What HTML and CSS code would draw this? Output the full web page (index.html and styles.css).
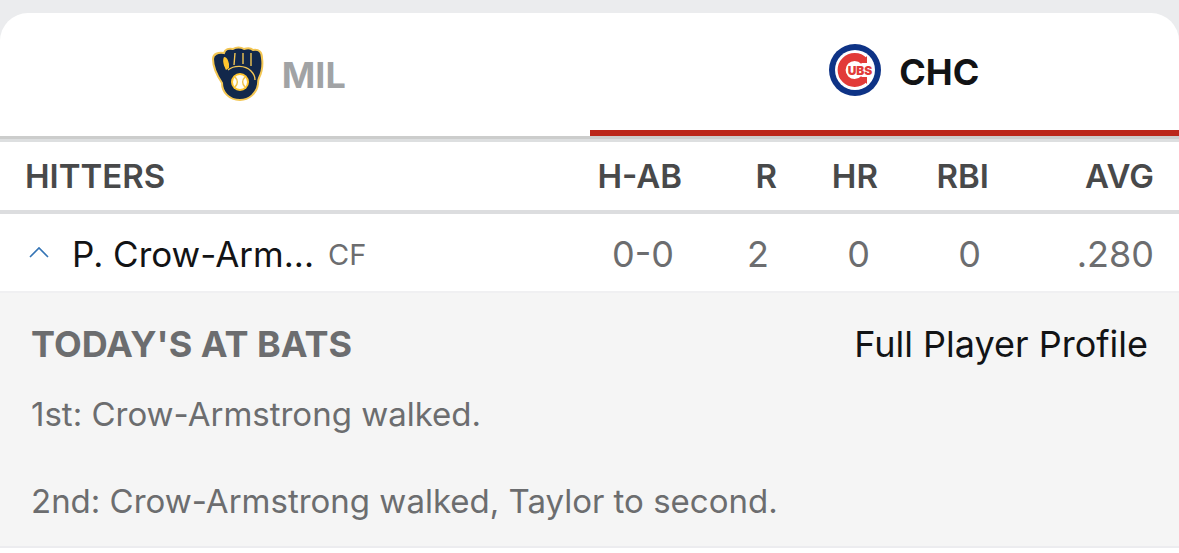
FILE: index.html
```html
<!DOCTYPE html>
<html lang="en">
<head>
    <meta charset="UTF-8">
    <meta name="viewport" content="width=device-width, initial-scale=1.0">
    <title>Box Score</title>
    <link rel="stylesheet" href="styles.css">
</head>
<body>
    <main class="card">
        <div class="tabs" role="tablist">
            <button class="tab" type="button" role="tab" aria-selected="false">
                <svg class="logo" viewBox="4 4 52 56" aria-hidden="true">
                    <path d="M5 18c0-5 5-7 11-6 1-4 5-5 9-4 3-2 8-2 11 0 3-1 7-1 9 1 6-1 9 2 9 8 1 7 0 14-3 20-1 2-1 4-1 6-1 9-9 16-18 16-11 0-18-8-18-17C10 36 5 26 5 18z" fill="#12284b" stroke="#f3c653" stroke-width="2"/>
                    <path d="M16 16c3 0 4 3 5 7v4l-3 2c-2-4-4-9-2-13z" fill="#ffc52f"/>
                    <path d="M27 12l-1 12M35 12v11M43 12v13" fill="none" stroke="#f3c653" stroke-width="1.4"/>
                    <path d="M20 29c6-5 17-5 23 1 3 3 4 6 4 9" fill="none" stroke="#f3c653" stroke-width="1.4"/>
                    <circle cx="32" cy="41" r="9" fill="#ffc52f"/>
                    <circle cx="32" cy="41" r="7" fill="#fffdf5"/>
                    <path d="M27 36c3 3 3 7 0 10M37 36c-3 3-3 7 0 10" fill="none" stroke="#f0c24a" stroke-width="1.6"/>
                </svg>
                <span>MIL</span>
            </button>
            <button class="tab active" type="button" role="tab" aria-selected="true">
                <svg class="logo" viewBox="5 3 52 56" aria-hidden="true">
                    <circle cx="31" cy="31" r="26" fill="#0e3386"/>
                    <circle cx="31" cy="31" r="20" fill="#fff"/>
                    <path d="M40 22A13 13 0 1 0 40 40" fill="none" stroke="#e23b38" stroke-width="8"/>
                    <path d="M43 17v7h-7zM43 45v-7h-7z" fill="#e23b38"/>
                    <path d="M24 25h24v12H24z" fill="#fff"/>
                    <text class="logo-text" x="36" y="36" text-anchor="middle">UBS</text>
                </svg>
                <span>CHC</span>
            </button>
        </div>

        <table class="stats">
            <colgroup>
                <col>
                <col class="col-hab">
                <col class="col-r">
                <col class="col-hr">
                <col class="col-rbi">
                <col class="col-avg">
            </colgroup>
            <thead>
                <tr>
                    <th scope="col">HITTERS</th>
                    <th scope="col">H-AB</th>
                    <th scope="col">R</th>
                    <th scope="col">HR</th>
                    <th scope="col">RBI</th>
                    <th scope="col">AVG</th>
                </tr>
            </thead>
            <tbody>
                <tr>
                    <td>
                        <button class="player" type="button" aria-expanded="true" aria-controls="at-bats">
                            <svg class="chevron" viewBox="0 0 20 12" aria-hidden="true">
                                <path d="M1 11l9-9 9 9" fill="none" stroke="#3474b5" stroke-width="1.6"/>
                            </svg>
                            <span class="name">P. Crow-Arm...</span>
                            <span class="position">CF</span>
                        </button>
                    </td>
                    <td>0-0</td>
                    <td>2</td>
                    <td>0</td>
                    <td>0</td>
                    <td>.280</td>
                </tr>
            </tbody>
        </table>

        <section class="details" id="at-bats">
            <div class="details-header">
                <h2>TODAY'S AT BATS</h2>
                <a href="#">Full Player Profile</a>
            </div>
            <p>1st: Crow-Armstrong walked.</p>
            <p>2nd: Crow-Armstrong walked, Taylor to second.</p>
        </section>
    </main>
</body>
</html>
```

FILE: styles.css
```css
* {
    box-sizing: border-box;
}
body {
    margin: 0;
    padding-top: 13px;
    background-color: #ebecee;
    font-family: Inter, "Liberation Sans", sans-serif;
    color: #121315;
}
button {
    font-family: inherit;
    background: none;
    border: none;
    padding: 0;
    cursor: pointer;
}
.card {
    background-color: #fff;
    border-radius: 28px 28px 0 0;
    overflow: hidden;
    padding-bottom: 6px;
}
.tabs {
    display: grid;
    grid-template-columns: 1fr 1fr;
    border-bottom: 3px solid #cccdcc;
}
.tab {
    height: 123px;
    display: flex;
    align-items: center;
    justify-content: center;
    gap: 18px;
    padding-right: 32px;
    font-size: 36px;
    font-weight: 700;
    color: #a1a3a5;
}
.tab.active {
    padding: 0 0 0 40px;
    color: #121315;
    border-bottom: 6px solid #bb271a;
}
.logo {
    width: 52px;
    height: 56px;
    margin-bottom: 4px;
}
.logo-text {
    font-size: 12px;
    font-weight: 900;
    fill: #e23b38;
}
.stats {
    width: 100%;
    table-layout: fixed;
    border-collapse: separate;
    border-spacing: 0;
    border-top: 3px solid #dddfe0;
}
.col-hab {
    width: 140px;
}
.col-r {
    width: 95px;
}
.col-hr {
    width: 101px;
}
.col-rbi {
    width: 111px;
}
.col-avg {
    width: 190px;
}
th {
    height: 72px;
    padding: 0;
    border-bottom: 4px solid #dcdddf;
    font-size: 33px;
    font-weight: 600;
    color: #48494a;
    text-align: right;
}
td {
    height: 77px;
    padding: 3px 8px 0 0;
    font-size: 36px;
    color: #6c6d6f;
    text-align: right;
}
th:first-child,
td:first-child {
    padding-left: 25px;
    text-align: left;
}
th:last-child,
td:last-child {
    padding-right: 25px;
}
.player {
    display: flex;
    align-items: center;
    font-size: 35px;
    color: #121315;
}
.chevron {
    width: 20px;
    height: 12px;
    margin: 0 23px 4px 4px;
}
.position {
    margin-left: 14px;
    font-size: 29px;
    color: #6c6d6f;
}
.details {
    padding: 29px 31px 23px;
    background-color: #f5f5f5;
    border-top: 2px solid #f0f0f2;
    border-bottom: 2px solid #ececef;
    color: #6c6d6f;
}
.details-header {
    display: flex;
    align-items: center;
    justify-content: space-between;
    font-size: 36px;
    line-height: 44px;
}
.details h2 {
    margin: 0;
    font-size: 36px;
    font-weight: 700;
}
.details a {
    color: #121315;
    text-decoration: none;
}
.details p {
    margin: 26px 0 0;
    font-size: 33px;
    line-height: 44px;
}
.details p + p {
    margin-top: 43px;
}
```
